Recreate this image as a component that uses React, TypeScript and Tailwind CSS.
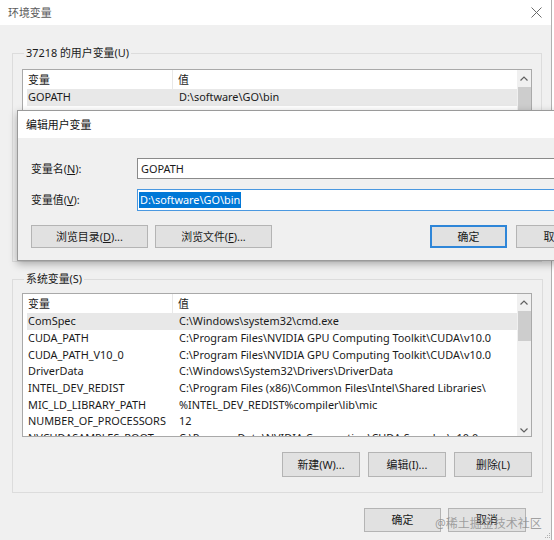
import React from "react";

type Row = [string, string];

const userRows: Row[] = [
  ["GOPATH", "D:\\software\\GO\\bin"],
  ["MOZ_PLUGIN_PATH", "D:\\software\\Foxit Reader\\plugins\\"],
  ["OneDrive", "C:\\Users\\37218\\OneDrive"],
  ["Path", "C:\\Users\\37218\\AppData\\Local\\Microsoft\\WindowsApps;"],
  ["TEMP", "C:\\Users\\37218\\AppData\\Local\\Temp"],
  ["TMP", "C:\\Users\\37218\\AppData\\Local\\Temp"],
  ["VSCODE", "D:\\software\\VSCode"],
  ["WORKON_HOME", "D:\\envs"],
];

const sysRows: Row[] = [
  ["ComSpec", "C:\\Windows\\system32\\cmd.exe"],
  ["CUDA_PATH", "C:\\Program Files\\NVIDIA GPU Computing Toolkit\\CUDA\\v10.0"],
  ["CUDA_PATH_V10_0", "C:\\Program Files\\NVIDIA GPU Computing Toolkit\\CUDA\\v10.0"],
  ["DriverData", "C:\\Windows\\System32\\Drivers\\DriverData"],
  ["INTEL_DEV_REDIST", "C:\\Program Files (x86)\\Common Files\\Intel\\Shared Libraries\\"],
  ["MIC_LD_LIBRARY_PATH", "%INTEL_DEV_REDIST%compiler\\lib\\mic"],
  ["NUMBER_OF_PROCESSORS", "12"],
  ["NVCUDASAMPLES_ROOT", "C:\\ProgramData\\NVIDIA Corporation\\CUDA Samples\\v10.0"],
];

function Chevron({ up }: { up?: boolean }) {
  return (
    <svg width="8" height="5" viewBox="0 0 8 5">
      <path
        d={up ? "M0.5 4.5 L4 1 L7.5 4.5" : "M0.5 0.5 L4 4 L7.5 0.5"}
        fill="none"
        stroke="#606060"
        strokeWidth="1.2"
      />
    </svg>
  );
}

function ListBox({ rows }: { rows: Row[] }) {
  return (
    <div className="flex h-[144px] w-[510px] overflow-hidden border border-[#a9a9a9] bg-white">
      <div className="flex flex-1 flex-col overflow-hidden">
        <div className="flex h-[19px] shrink-0 items-center">
          <div className="flex h-full w-[150px] items-center border-r border-[#e8e8e8] pl-[5px]">变量</div>
          <div className="pl-[5px]">值</div>
        </div>
        {rows.map((r, i) => (
          <div
            key={r[0]}
            className={`ml-[4px] flex h-[16.65px] shrink-0 items-center whitespace-nowrap ${
              i === 0 ? "bg-[#e8e8e8]" : ""
            }`}
          >
            <div className="w-[146px] shrink-0 pl-[1px]">{r[0]}</div>
            <div className="pl-[6px]">{r[1]}</div>
          </div>
        ))}
      </div>
      <div className="flex w-[14px] shrink-0 flex-col items-center bg-[#f0f0f0]">
        <div className="flex h-[17px] items-center justify-center">
          <Chevron up />
        </div>
        <div className="h-[30px] w-[13px] bg-[#cdcdcd]" />
        <div className="flex-1" />
        <div className="flex h-[12px] items-center justify-center">
          <Chevron />
        </div>
      </div>
    </div>
  );
}

function Btn({
  children,
  w,
  def,
}: {
  children: React.ReactNode;
  w: string;
  def?: boolean;
}) {
  return (
    <div
      className={`flex h-full items-center justify-center whitespace-nowrap bg-[#e1e1e1] ${w} ${
        def ? "border-2 border-[#2f86d8]" : "border border-[#b4b4b4]"
      }`}
    >
      {children}
    </div>
  );
}

export default function App() {
  return (
    <div className="relative h-[540px] w-[554px] overflow-hidden bg-white font-['Noto_Sans','Noto_Sans_CJK_SC',sans-serif] text-[10.9px] leading-[14px] text-[#1a1a1a]">
      <div className="flex h-full w-[552px] flex-col border-r border-[#b0b0b0]">
        {/* title bar */}
        <div className="flex h-[25px] shrink-0 items-center justify-between bg-white pl-[8px] pr-[9px]">
          <span className="text-[#5a5a5a]">环境变量</span>
          <svg width="11" height="11" viewBox="0 0 11 11">
            <path d="M0.5 0.5 L10.5 10.5 M10.5 0.5 L0.5 10.5" stroke="#6a6a6a" strokeWidth="1" />
          </svg>
        </div>
        {/* body */}
        <div className="flex flex-1 flex-col bg-[#f0f0f0]">
          <fieldset className="ml-[12px] mt-[21px] h-[216px] w-[530px] border border-[#dcdcdc] pl-[9px]">
            <legend className="ml-[2px] px-[2px] leading-[14px]">37218 的用户变量(U)</legend>
            <div className="mt-[9px]">
              <ListBox rows={userRows} />
            </div>
          </fieldset>

          <fieldset className="ml-[12px] mt-[10px] w-[530px] border border-[#dcdcdc] pb-[15px] pl-[9px] pr-[10px]">
            <legend className="ml-[2px] px-[2px] leading-[14px]">系统变量(S)</legend>
            <div className="mt-[7px]">
              <ListBox rows={sysRows} />
            </div>
            <div className="mt-[15px] flex h-[25px] justify-end gap-[8px]">
              <Btn w="w-[78px]">新建(W)...</Btn>
              <Btn w="w-[78px]">编辑(I)...</Btn>
              <Btn w="w-[78px]">删除(L)</Btn>
            </div>
          </fieldset>

          <div className="mt-[15px] flex h-[24px] justify-end gap-[7px] pr-[25px]">
            <Btn w="w-[77px]">确定</Btn>
            <Btn w="w-[78px]">取消</Btn>
          </div>
        </div>
      </div>

      {/* resize grip */}
      <svg className="absolute bottom-[1px] right-[3px]" width="7" height="7" viewBox="0 0 7 7">
        <rect x="5" y="1" width="1" height="1" fill="#b0b0b0" />
        <rect x="3" y="3" width="1" height="1" fill="#b0b0b0" />
        <rect x="5" y="3" width="1" height="1" fill="#b0b0b0" />
        <rect x="1" y="5" width="1" height="1" fill="#b0b0b0" />
        <rect x="3" y="5" width="1" height="1" fill="#b0b0b0" />
        <rect x="5" y="5" width="1" height="1" fill="#b0b0b0" />
      </svg>

      {/* edit dialog */}
      <div className="absolute left-[17px] top-[110px] flex h-[151px] w-[600px] flex-col border border-[#9a9a9a] shadow-[0_3px_8px_rgba(0,0,0,0.3)]">
        <div className="flex h-[27px] shrink-0 items-center bg-white pl-[8px] text-[#111]">编辑用户变量</div>
        <div className="flex flex-1 flex-col bg-[#f0f0f0] pl-[13px]">
          <div className="mt-[20px] flex h-[21px] items-center">
            <div className="w-[106px]">
              变量名(<span className="underline">N</span>):
            </div>
            <div className="flex h-full w-[460px] items-center border border-[#8a8a8a] bg-white pl-[3px]">GOPATH</div>
          </div>
          <div className="mt-[10px] flex h-[22px] items-center">
            <div className="w-[106px]">
              变量值(<span className="underline">V</span>):
            </div>
            <div className="flex h-full w-[460px] items-center border border-[#4a98e0] bg-white pl-[1px]">
              <span className="bg-[#0078d7] px-[1px] py-[1px] text-white">D:\software\GO\bin</span>
            </div>
          </div>
          <div className="mt-[14px] flex h-[23px]">
            <Btn w="w-[117px]">
              <span>
                浏览目录(<span className="underline">D</span>)...
              </span>
            </Btn>
            <div className="ml-[7px] h-full">
              <Btn w="w-[117px]">
                <span>
                  浏览文件(<span className="underline">F</span>)...
                </span>
              </Btn>
            </div>
            <div className="ml-[158px] h-full">
              <Btn w="w-[77px]" def>
                确定
              </Btn>
            </div>
            <div className="ml-[9px] h-full">
              <Btn w="w-[77px]">取消</Btn>
            </div>
          </div>
        </div>
      </div>

      {/* watermark */}
      <div className="pointer-events-none absolute left-[435px] top-[516px] text-[12px] leading-[16px] text-[#8c8c8c]/80">
        @稀土掘金技术社区
      </div>
    </div>
  );
}
